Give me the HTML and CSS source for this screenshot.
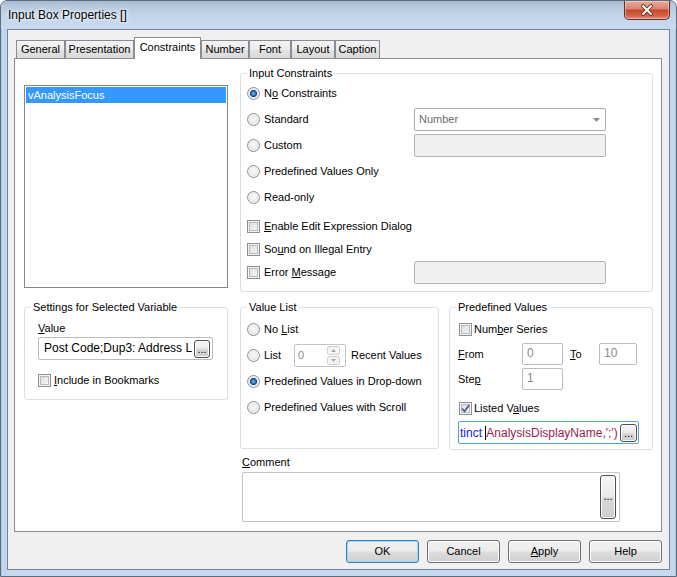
FILE: index.html
```html
<!DOCTYPE html>
<html>
<head>
<meta charset="utf-8">
<title>Input Box Properties</title>
<link rel="stylesheet" href="styles.css">
</head>
<body>
<div class="window">
  <div class="titlebar">
    <span class="title">Input Box Properties []</span>
    <div class="close">
      <svg width="14" height="12" viewBox="0 0 14 12"><path d="M3 2 L11 10 M11 2 L3 10" stroke="#6a2418" stroke-width="3.6" stroke-linecap="round"/><path d="M3 2 L11 10 M11 2 L3 10" stroke="#ffffff" stroke-width="2" stroke-linecap="round"/></svg>
    </div>
  </div>
  <div class="client">
    <div class="tabs">
      <div class="tab t-general">General</div>
      <div class="tab t-presentation">Presentation</div>
      <div class="tab sel t-constraints">Constraints</div>
      <div class="tab t-number">Number</div>
      <div class="tab t-font">Font</div>
      <div class="tab t-layout">Layout</div>
      <div class="tab t-caption">Caption</div>
    </div>
    <div class="page">
      <div class="listbox"><div class="item selected">vAnalysisFocus</div></div>

      <fieldset class="group ic">
        <legend>Input Constraints</legend>
        <div class="ic-body">
          <div class="row"><label class="opt"><span class="radio on"></span><span>N<u>o</u> Constraints</span></label></div>
          <div class="row"><label class="opt"><span class="radio"></span><span>Standard</span></label>
            <div class="combo"><span class="combo-text">Number</span><svg width="7" height="4" viewBox="0 0 7 4"><path d="M0 0 H7 L3.5 4 Z" fill="#8a8a8a"/></svg></div>
          </div>
          <div class="row"><label class="opt"><span class="radio"></span><span>Custom</span></label><div class="field off"></div></div>
          <div class="row"><label class="opt"><span class="radio"></span><span>Predefined Values Only</span></label></div>
          <div class="row"><label class="opt"><span class="radio"></span><span>Read-only</span></label></div>
          <div class="checks">
            <div class="crow"><label class="opt"><span class="check"></span><span><u>E</u>nable Edit Expression Dialog</span></label></div>
            <div class="crow"><label class="opt"><span class="check"></span><span>So<u>u</u>nd on Illegal Entry</span></label></div>
            <div class="crow"><label class="opt"><span class="check"></span><span>Error <u>M</u>essage</span></label><div class="field off err"></div></div>
          </div>
        </div>
      </fieldset>

      <fieldset class="group settings">
        <legend>Settings for Selected Variable</legend>
        <div class="settings-body">
          <div class="lbl"><u>V</u>alue</div>
          <div class="textbox"><span class="tb-text">Post Code;Dup3: Address L</span><span class="dots">...</span></div>
          <label class="opt incl"><span class="check"></span><span><u>I</u>nclude in Bookmarks</span></label>
        </div>
      </fieldset>

      <div class="pair">
        <fieldset class="group vl">
          <legend>Value List</legend>
          <div class="vl-body">
            <div class="row"><label class="opt"><span class="radio"></span><span>No <u>L</u>ist</span></label></div>
            <div class="row"><label class="opt list-opt"><span class="radio"></span><span>List</span></label>
              <div class="spinner"><span class="sp-val">0</span>
                <span class="sp-btns">
                  <span class="sp-b"><svg width="5" height="3" viewBox="0 0 5 3"><path d="M0 3 H5 L2.5 0 Z" fill="#a8a8a8"/></svg></span>
                  <span class="sp-b"><svg width="5" height="3" viewBox="0 0 5 3"><path d="M0 0 H5 L2.5 3 Z" fill="#a8a8a8"/></svg></span>
                </span>
              </div>
              <span class="recent">Recent Values</span>
            </div>
            <div class="row"><label class="opt"><span class="radio on"></span><span>Predefined Values in Drop-down</span></label></div>
            <div class="row"><label class="opt"><span class="radio"></span><span>Predefined Values with Scroll</span></label></div>
          </div>
        </fieldset>

        <fieldset class="group pv">
          <legend>Predefined Values</legend>
          <div class="pv-body">
            <div class="pv-row ns"><label class="opt"><span class="check"></span><span>Num<u>b</u>er Series</span></label></div>
            <div class="pv-row fr"><span class="pl"><u>F</u>rom</span><span class="num w41">0</span><span class="pl to"><u>T</u>o</span><span class="num w38">10</span></div>
            <div class="pv-row st"><span class="pl">Ste<u>p</u></span><span class="num w41">1</span></div>
            <div class="pv-row lv"><label class="opt"><span class="check"><svg width="9" height="9" viewBox="0 0 9 9"><path d="M1 4.5 L3.6 7.3 L8 1.2" fill="none" stroke="#4a5f8c" stroke-width="1.8"/></svg></span><span>Listed V<u>a</u>lues</span></label></div>
            <div class="expr"><span class="ex-text"><span class="kw">tinct </span><span class="caret"></span><span class="fld">AnalysisDisplayName,';')</span></span><span class="dots">...</span></div>
          </div>
        </fieldset>
      </div>

      <div class="comment">
        <div class="lbl"><u>C</u>omment</div>
        <div class="textarea"><span class="dots tall">...</span></div>
      </div>
    </div>
    <div class="buttons">
      <div class="btn default">OK</div>
      <div class="btn">Cancel</div>
      <div class="btn"><span><u>A</u>pply</span></div>
      <div class="btn">Help</div>
    </div>
  </div>
</div>
</body>
</html>
```

FILE: styles.css
```css
* { box-sizing: border-box; }
html, body { margin: 0; padding: 0; }
body {
  width: 677px;
  height: 577px;
  overflow: hidden;
  font: 11px/13px "Liberation Sans", Arial, sans-serif;
  color: #000;
  background: #ffffff;
}
u { text-decoration: underline; text-underline-offset: 1px; }

.window {
  width: 677px;
  height: 577px;
  display: flex;
  flex-direction: column;
  border-radius: 7px 7px 0 0;
  background: linear-gradient(90deg, #8fa6c2 0, #c9dcf1 1px, #bdd3ec 4px, #c6daf0 6px, #c6daf0 calc(100% - 6px), #bdd3ec calc(100% - 4px), #c9dcf1 calc(100% - 1px), #8fa6c2 100%);
  border: 1px solid #5d6d80;
}

.titlebar {
  height: 28px;
  display: flex;
  align-items: flex-start;
  padding-left: 7px;
  border-radius: 6px 6px 0 0;
  background: linear-gradient(#a7b9cf 0, #b5c8de 5px, #c1d4ea 14px, #c8dbf0 28px);
}
.title {
  padding-top: 7px;
  font-size: 12px;
  line-height: 14px;
  text-shadow: 0 0 5px #ffffff, 0 0 3px #ffffff;
}
.close {
  margin-left: auto;
  margin-right: 6px;
  width: 46px;
  height: 19px;
  display: flex;
  align-items: center;
  justify-content: center;
  border: 1px solid #6b2a22;
  border-top: none;
  border-radius: 0 0 5px 5px;
  background: linear-gradient(#e8ab9c 0, #db8470 42%, #c64a30 52%, #cf6548 82%, #e29278 100%);
  box-shadow: inset 0 0 0 1px rgba(255, 255, 255, 0.35);
}

.client {
  margin: 0 6px 0 6px;
  height: 541px;
  border: 1px solid #72839a;
  background: #f0f0f0;
  padding: 7px 7px 0 6px;
  display: flex;
  flex-direction: column;
}

.tabs {
  display: flex;
  align-items: flex-end;
  height: 21px;
  margin-left: 2px;
}
.tab {
  height: 18px;
  border: 1px solid #898c95;
  border-bottom: none;
  background: linear-gradient(#f3f3f3, #ebebeb 50%, #e2e2e2 51%, #dadada);
  display: flex;
  align-items: center;
  justify-content: center;
  white-space: nowrap;
}
.tab.sel {
  position: relative;
  z-index: 1;
  height: 22px;
  margin-bottom: -1px;
  background: #ffffff;
  padding-bottom: 3px;
}
.t-general { width: 49px; }
.t-presentation { width: 69px; }
.t-constraints { width: 67px; }
.t-number { width: 48px; }
.t-font { width: 42px; }
.t-layout { width: 44px; }
.t-caption { width: 45px; }

.page {
  width: 648px;
  height: 474px;
  border: 1px solid #898c95;
  background: #ffffff;
  padding: 8px 0 0 9px;
  display: grid;
  grid-template-columns: 204px 413px;
  column-gap: 12px;
  align-items: start;
  align-content: start;
}

.listbox {
  margin-top: 18px;
  height: 203px;
  border: 1px solid #828790;
  padding: 1px;
}
.item {
  height: 16px;
  line-height: 16px;
  padding-left: 2px;
}
.item.selected { background: #3399ff; color: #ffffff; }

.group {
  margin: 0;
  padding: 0;
  min-width: 0;
  border: 1px solid #d5dfe5;
  border-radius: 3px;
}
.group legend {
  margin-left: 6px;
  padding: 0 2px;
  line-height: 13px;
}

.opt {
  display: flex;
  align-items: center;
  gap: 4px;
  white-space: nowrap;
}

.radio {
  width: 13px;
  height: 13px;
  flex: none;
  border-radius: 50%;
  border: 1px solid #8e8f8f;
  background: radial-gradient(circle at 50% 45%, #fbfbfb 0, #ececec 45%, #cfcfcf 100%);
  box-shadow: inset 0 0 0 1px #f3f3f3;
}
.radio.on {
  background: radial-gradient(circle at 50% 50%, #8cc6f2 0, #2f7fc6 1.6px, #184d86 3.3px, #f1f1f1 3.9px, #e3e3e3 55%, #cfcfcf 100%);
}

.check {
  width: 13px;
  height: 13px;
  flex: none;
  border: 1px solid #8e8f8f;
  background: linear-gradient(135deg, #d6d9dd, #fafafa);
  box-shadow: inset 0 0 0 1px #f4f4f4, inset 0 0 0 2px #b6b9bd;
  display: flex;
  align-items: center;
  justify-content: center;
}

/* Input constraints */
.ic { padding-bottom: 7px; }
.ic-body { padding-left: 6px; }
.ic .row {
  height: 26px;
  display: flex;
  align-items: center;
}
.ic .opt { width: 167px; }
.combo {
  align-self: flex-start;
  margin-top: 2px;
  width: 192px;
  height: 23px;
  border: 1px solid #acacac;
  border-radius: 2px;
  background: #ffffff;
  display: flex;
  align-items: center;
  padding: 0 5px 0 4px;
  color: #6d6d6d;
}
.combo-text { flex: 1; }
.field {
  align-self: flex-start;
  margin-top: 2px;
  width: 192px;
  height: 23px;
  border: 1px solid #b4b4b4;
  border-radius: 2px;
}
.field.off { background: #f0f0f0; }
.checks { margin-top: 5px; }
.crow {
  height: 23px;
  display: flex;
  align-items: center;
}
.field.err { margin-top: 0; }

/* settings */
.settings { margin-top: 9px; padding-bottom: 11px; }
.settings-body { padding: 0 14px 0 13px; }
.lbl { line-height: 13px; }
.settings .lbl { margin-top: 8px; }
.textbox {
  margin-top: 2px;
  height: 23px;
  border: 1px solid #b9bcc1;
  border-radius: 2px;
  display: flex;
  align-items: center;
  padding: 0 2px 0 5px;
  font-size: 12px;
}
.tb-text, .ex-text {
  flex: 1;
  min-width: 0;
  white-space: nowrap;
}
.dots {
  flex: none;
  width: 16px;
  height: 18px;
  border: 1px solid #4f4f4f;
  border-radius: 3px;
  background: linear-gradient(#f6f6f6, #e9e9e9 50%, #d9d9d9 51%, #cdcdcd);
  box-shadow: inset 0 0 0 1px #fbfbfb;
  display: flex;
  align-items: flex-end;
  justify-content: center;
  font-size: 11px;
  line-height: 12px;
  padding-bottom: 2px;
}
.incl { margin-top: 13px; height: 15px; gap: 3px; }

/* value list + predefined */
.pair {
  margin-top: 9px;
  display: flex;
  gap: 10px;
  align-items: flex-start;
}
.vl { width: 199px; padding-bottom: 28px; }
.vl-body { padding-left: 6px; margin-top: 2px; }
.vl .row {
  height: 26px;
  display: flex;
  align-items: center;
}
.list-opt { width: 47px; }
.spinner {
  width: 52px;
  height: 23px;
  border: 1px solid #c4c4c4;
  border-radius: 2px;
  display: flex;
  align-items: center;
  padding: 0 5px 0 3px;
  color: #8a8a8a;
}
.sp-val { flex: 1; }
.sp-btns { display: flex; flex-direction: column; gap: 1px; }
.sp-b {
  width: 13px;
  height: 9px;
  border: 1px solid #d0d0d0;
  border-radius: 2px;
  background: #f4f4f4;
  display: flex;
  align-items: center;
  justify-content: center;
}
.recent { margin-left: 5px; }

.pv { width: 204px; padding-bottom: 5px; }
.pv-body { padding-left: 8px; }
.pv-row { display: flex; align-items: center; }
.pv .opt { gap: 2px; margin-left: 1px; }
.ns { margin-top: 6px; height: 18px; }
.fr { margin-top: 5px; height: 22px; }
.st { margin-top: 3px; height: 22px; }
.lv { margin-top: 10px; height: 16px; }
.pl { width: 64px; }
.pl.to { width: 29px; margin-left: 7px; }
.num {
  height: 22px;
  border: 1px solid #b9bcc1;
  border-radius: 2px;
  padding: 2px 0 0 4px;
  color: #8a8a8a;
  font-size: 12px;
  line-height: 15px;
}
.w41 { width: 41px; }
.w38 { width: 38px; }
.expr {
  margin-top: 5px;
  width: 181px;
  height: 23px;
  border: 1px solid #5a9ee0;
  border-radius: 2px;
  display: flex;
  align-items: center;
  padding: 0 1px 0 1px;
  font-size: 12px;
}
.expr .dots { width: 17px; }
.kw { color: #1a1ae0; }
.fld { color: #9a1d4c; }
.caret {
  display: inline-block;
  width: 1px;
  height: 14px;
  background: #000;
  vertical-align: -3px;
}

/* comment */
.comment { grid-column: 2; margin-top: 6px; padding-left: 2px; }
.textarea {
  margin-top: 3px;
  width: 378px;
  height: 50px;
  border: 1px solid #c2c4c8;
  border-radius: 2px;
  display: flex;
  justify-content: flex-end;
  padding: 2px 3px 0 0;
}
.dots.tall {
  height: 44px;
  width: 16px;
  align-items: center;
  padding-bottom: 3px;
}

/* buttons */
.buttons {
  margin-top: 8px;
  display: flex;
  justify-content: flex-end;
  gap: 8px;
}
.btn {
  width: 73px;
  height: 23px;
  border: 1px solid #707070;
  border-radius: 3px;
  background: linear-gradient(#f2f2f2 0, #ebebeb 48%, #dddddd 52%, #cfcfcf 100%);
  box-shadow: inset 0 0 0 1px #fcfcfc;
  display: flex;
  align-items: center;
  justify-content: center;
}
.btn.default {
  border-color: #3c7fb1;
  box-shadow: inset 0 0 0 1px #97d9f7;
}
```
